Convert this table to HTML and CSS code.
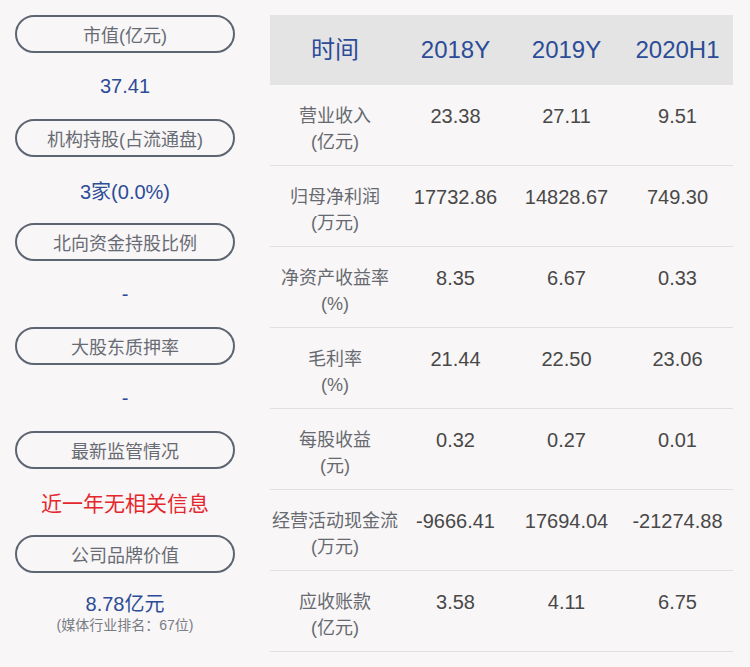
FILE: index.html
```html
<!DOCTYPE html>
<html lang="zh">
<head>
<meta charset="utf-8">
<link rel="stylesheet" href="styles.css">
</head>
<body>
<div class="page">
  <div class="side">
    <div class="block"><div class="pill">市值(亿元)</div><div class="val">37.41</div></div>
    <div class="block"><div class="pill">机构持股(占流通盘)</div><div class="val">3家(0.0%)</div></div>
    <div class="block"><div class="pill">北向资金持股比例</div><div class="val">-</div></div>
    <div class="block"><div class="pill">大股东质押率</div><div class="val">-</div></div>
    <div class="block"><div class="pill">最新监管情况</div><div class="val red">近一年无相关信息</div></div>
    <div class="block"><div class="pill">公司品牌价值</div><div class="val brand"><div>8.78亿元</div><div class="sub">(媒体行业排名：67位)</div></div></div>
  </div>
  <div class="table">
    <div class="row head">
      <div class="c">时间</div><div class="c">2018Y</div><div class="c">2019Y</div><div class="c">2020H1</div>
    </div>
    <div class="row">
      <div class="c lbl">营业收入<br>(亿元)</div><div class="c">23.38</div><div class="c">27.11</div><div class="c">9.51</div>
    </div>
    <div class="row">
      <div class="c lbl">归母净利润<br>(万元)</div><div class="c">17732.86</div><div class="c">14828.67</div><div class="c">749.30</div>
    </div>
    <div class="row">
      <div class="c lbl">净资产收益率<br>(%)</div><div class="c">8.35</div><div class="c">6.67</div><div class="c">0.33</div>
    </div>
    <div class="row">
      <div class="c lbl">毛利率<br>(%)</div><div class="c">21.44</div><div class="c">22.50</div><div class="c">23.06</div>
    </div>
    <div class="row">
      <div class="c lbl">每股收益<br>(元)</div><div class="c">0.32</div><div class="c">0.27</div><div class="c">0.01</div>
    </div>
    <div class="row">
      <div class="c lbl">经营活动现金流<br>(万元)</div><div class="c">-9666.41</div><div class="c">17694.04</div><div class="c">-21274.88</div>
    </div>
    <div class="row">
      <div class="c lbl">应收账款<br>(亿元)</div><div class="c">3.58</div><div class="c">4.11</div><div class="c">6.75</div>
    </div>
  </div>
</div>
</body>
</html>
```
FILE: styles.css
```css
html, body {
  margin: 0;
  padding: 0;
  background: #f9f6f7;
}
body {
  font-family: "Liberation Sans", "Noto Sans CJK SC", sans-serif;
  width: 750px;
  height: 667px;
  overflow: hidden;
}
.page {
  display: flex;
  padding: 15px 17px 0 15px;
  gap: 35px;
}
.side {
  width: 220px;
  display: flex;
  flex-direction: column;
}
.block {
  display: flex;
  flex-direction: column;
  height: 104px;
}
.pill {
  box-sizing: border-box;
  height: 38px;
  border: 2px solid #5d6573;
  border-radius: 19px;
  display: flex;
  align-items: center;
  justify-content: center;
  font-size: 18px;
  color: #676c74;
}
.val {
  height: 66px;
  display: flex;
  align-items: center;
  justify-content: center;
  font-size: 20px;
  color: #2c4c98;
}
.val.red {
  color: #e4262d;
  font-size: 21px;
}
.val.brand {
  flex-direction: column;
  justify-content: flex-start;
  padding-top: 19px;
  box-sizing: border-box;
  line-height: 24px;
}
.sub {
  font-size: 14px;
  color: #787c84;
  line-height: 20px;
  margin-top: -1px;
}
.table {
  width: 463px;
  display: flex;
  flex-direction: column;
}
.row {
  display: grid;
  grid-template-columns: 130px repeat(3, 111px);
  height: 81px;
  box-sizing: border-box;
  border-bottom: 1px solid #e2dfe0;
  padding-top: 18px;
  font-size: 20px;
  color: #484848;
  line-height: 26px;
}
.row .c {
  text-align: center;
  white-space: nowrap;
}
.row.head {
  height: 70px;
  background: #e4e4e4;
  border-bottom: none;
  padding-top: 0;
  align-items: center;
  font-size: 24px;
  color: #2c4c98;
}
.lbl {
  font-size: 18px;
  color: #666a70;
}
```
